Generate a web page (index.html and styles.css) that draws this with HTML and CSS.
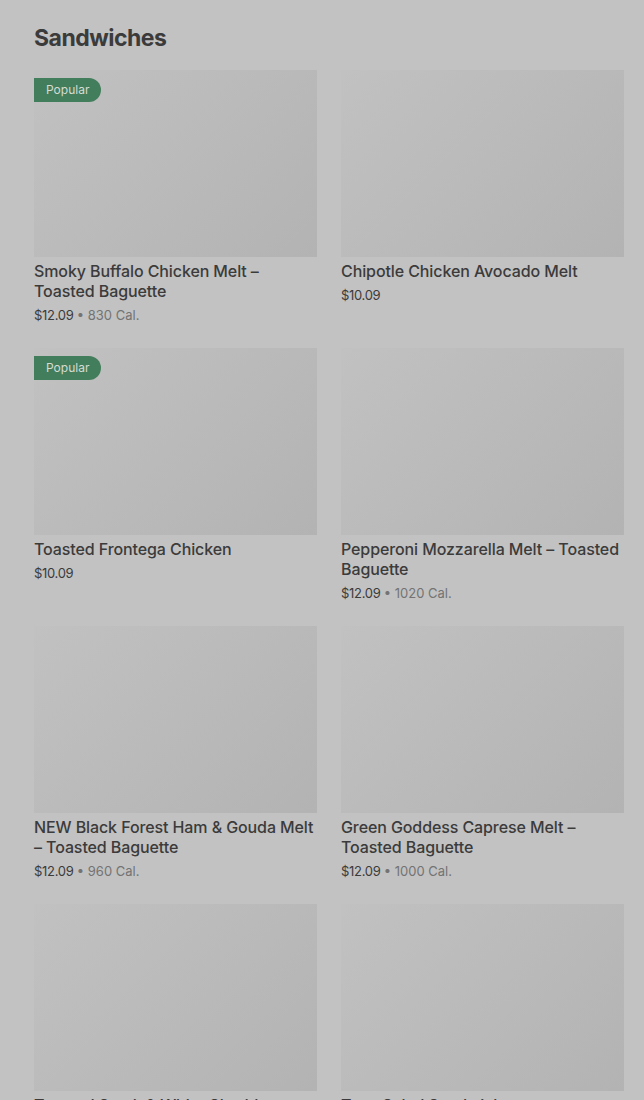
FILE: index.html
```html
<!DOCTYPE html>
<html lang="en">
<head>
    <meta charset="UTF-8">
    <meta name="viewport" content="width=device-width, initial-scale=1.0">
    <title>Sandwiches</title>
    <link rel="stylesheet" href="styles.css">
</head>
<body>
    <section class="menu">
        <h2 class="menu-title">Sandwiches</h2>
        <div class="grid">
            <div class="item">
                <div class="photo"><span class="badge">Popular</span></div>
                <div class="name">Smoky Buffalo Chicken Melt – Toasted Baguette</div>
                <div class="price">$12.09 <span class="cal">• 830 Cal.</span></div>
            </div>
            <div class="item">
                <div class="photo"></div>
                <div class="name">Chipotle Chicken Avocado Melt</div>
                <div class="price">$10.09</div>
            </div>
            <div class="item">
                <div class="photo"><span class="badge">Popular</span></div>
                <div class="name">Toasted Frontega Chicken</div>
                <div class="price">$10.09</div>
            </div>
            <div class="item">
                <div class="photo"></div>
                <div class="name">Pepperoni Mozzarella Melt – Toasted Baguette</div>
                <div class="price">$12.09 <span class="cal">• 1020 Cal.</span></div>
            </div>
            <div class="item">
                <div class="photo"></div>
                <div class="name">NEW Black Forest Ham &amp; Gouda Melt – Toasted Baguette</div>
                <div class="price">$12.09 <span class="cal">• 960 Cal.</span></div>
            </div>
            <div class="item">
                <div class="photo"></div>
                <div class="name">Green Goddess Caprese Melt – Toasted Baguette</div>
                <div class="price">$12.09 <span class="cal">• 1000 Cal.</span></div>
            </div>
            <div class="item">
                <div class="photo"></div>
                <div class="name">Toasted Steak &amp; White Cheddar</div>
                <div class="price">$12.09</div>
            </div>
            <div class="item">
                <div class="photo"></div>
                <div class="name">Tuna Salad Sandwich</div>
                <div class="price">$10.09</div>
            </div>
        </div>
    </section>
</body>
</html>
```

FILE: styles.css
```css
body {
    margin: 0;
    background-color: #c2c2c2;
    font-family: Inter, "Noto Sans", sans-serif;
    color: #3b3b3b;
    overflow: hidden;
}
.menu {
    padding: 22px 20px 0 34px;
}
.menu-title {
    margin: 0 0 16px;
    font-size: 23px;
    line-height: 32px;
    font-weight: 700;
    letter-spacing: -0.5px;
}
.grid {
    display: grid;
    grid-template-columns: 1fr 1fr;
    column-gap: 24px;
    row-gap: 24px;
}
.photo {
    position: relative;
    height: 187px;
    background: linear-gradient(135deg, #c1c1c1, #b3b3b3);
}
.badge {
    position: absolute;
    left: 0;
    top: 8px;
    height: 24px;
    padding: 0 12px;
    line-height: 24px;
    font-size: 12px;
    color: #d3dcd5;
    background-color: #437e5c;
    border-radius: 0 12px 12px 0;
}
.name {
    margin-top: 4px;
    font-size: 16px;
    line-height: 20px;
    font-weight: 500;
    letter-spacing: -0.1px;
}
.price {
    margin-top: 5px;
    font-size: 13px;
    line-height: 18px;
    letter-spacing: -0.3px;
    color: #3b3b3b;
}
.cal {
    color: #737373;
    letter-spacing: 0;
}
```
